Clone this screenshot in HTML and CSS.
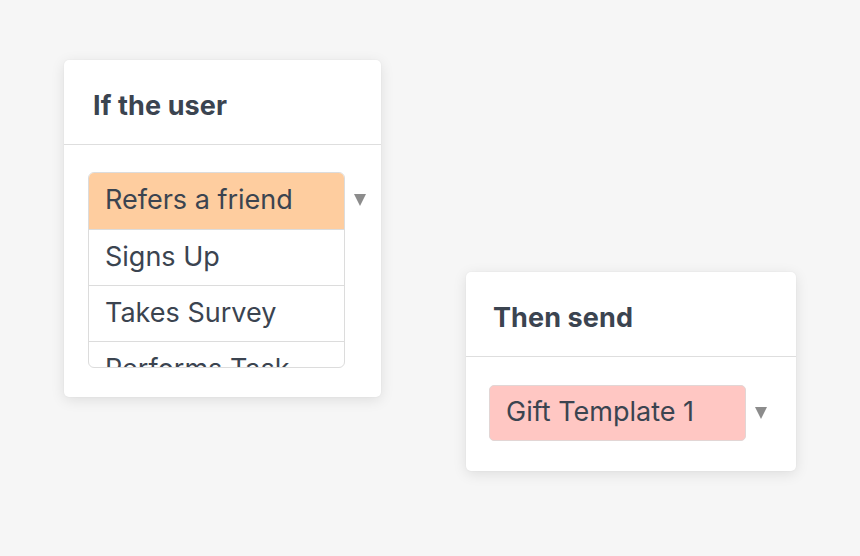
FILE: index.html
```html
<!DOCTYPE html>
<html>
<head>
<meta charset="utf-8">
<link rel="stylesheet" href="styles.css">
</head>
<body>
<div class="canvas">
  <section class="card card-trigger">
    <header class="card-head"><h2>If the user</h2></header>
    <div class="card-body">
      <div class="list">
        <div class="opt opt-active">Refers a friend</div>
        <div class="opt">Signs Up</div>
        <div class="opt">Takes Survey</div>
        <div class="opt">Performs Task</div>
      </div>
      <span class="caret"></span>
    </div>
  </section>
  <section class="card card-action">
    <header class="card-head"><h2>Then send</h2></header>
    <div class="card-body">
      <div class="select">Gift Template 1</div>
      <span class="caret"></span>
    </div>
  </section>
</div>
</body>
</html>
```
FILE: styles.css
```css
html, body { margin: 0; padding: 0; }
body {
  background: #f6f6f6;
  font-family: Inter, Roboto, "Liberation Sans", sans-serif;
  color: #3b4450;
  width: 860px;
  height: 556px;
  overflow: hidden;
}
.canvas {
  display: flex;
  align-items: flex-start;
  padding: 60px 0 0 64px;
  gap: 85px;
}
.card {
  background: #fff;
  border-radius: 5px;
  box-shadow: 0 3px 14px rgba(0,0,0,0.10), 0 0 2px rgba(0,0,0,0.06);
}
.card-trigger { width: 317px; }
.card-action { width: 330px; margin-top: 212px; }
.card-head {
  height: 85px;
  box-sizing: border-box;
  border-bottom: 1px solid #dedede;
  display: flex;
  align-items: center;
  padding: 6px 0 0 29px;
}
.card-action .card-head { padding-left: 27px; }
.card-head h2 {
  margin: 0;
  font-size: 27px;
  font-weight: 750;
  letter-spacing: 0.1px;
}
.card-body {
  display: flex;
  align-items: flex-start;
  padding: 27px 0 29px 24px;
}
.card-action .card-body { padding: 28px 0 30px 23px; }
.list {
  width: 255px;
  height: 194px;
  border: 1px solid #dcdcdc;
  border-radius: 6px;
  overflow: hidden;
}
.opt {
  height: 56px;
  box-sizing: border-box;
  border-top: 1px solid #dcdcdc;
  display: flex;
  align-items: center;
  padding: 0 0 2px 16px;
  font-size: 27px;
}
.opt:first-child { border-top: 0; padding-bottom: 4px; }
.opt-active { background: #fecd9f; }
.select {
  width: 239px;
  height: 50px;
  border: 1px solid #e2d6d5;
  border-radius: 5px;
  background: #ffc7c3;
  display: flex;
  align-items: center;
  padding: 0 0 4px 16px;
  font-size: 27px;
}
.caret {
  width: 0; height: 0;
  border-left: 6.5px solid transparent;
  border-right: 6.5px solid transparent;
  border-top: 12px solid #8c8c8c;
  margin: 22px 0 0 9px;
}
```
